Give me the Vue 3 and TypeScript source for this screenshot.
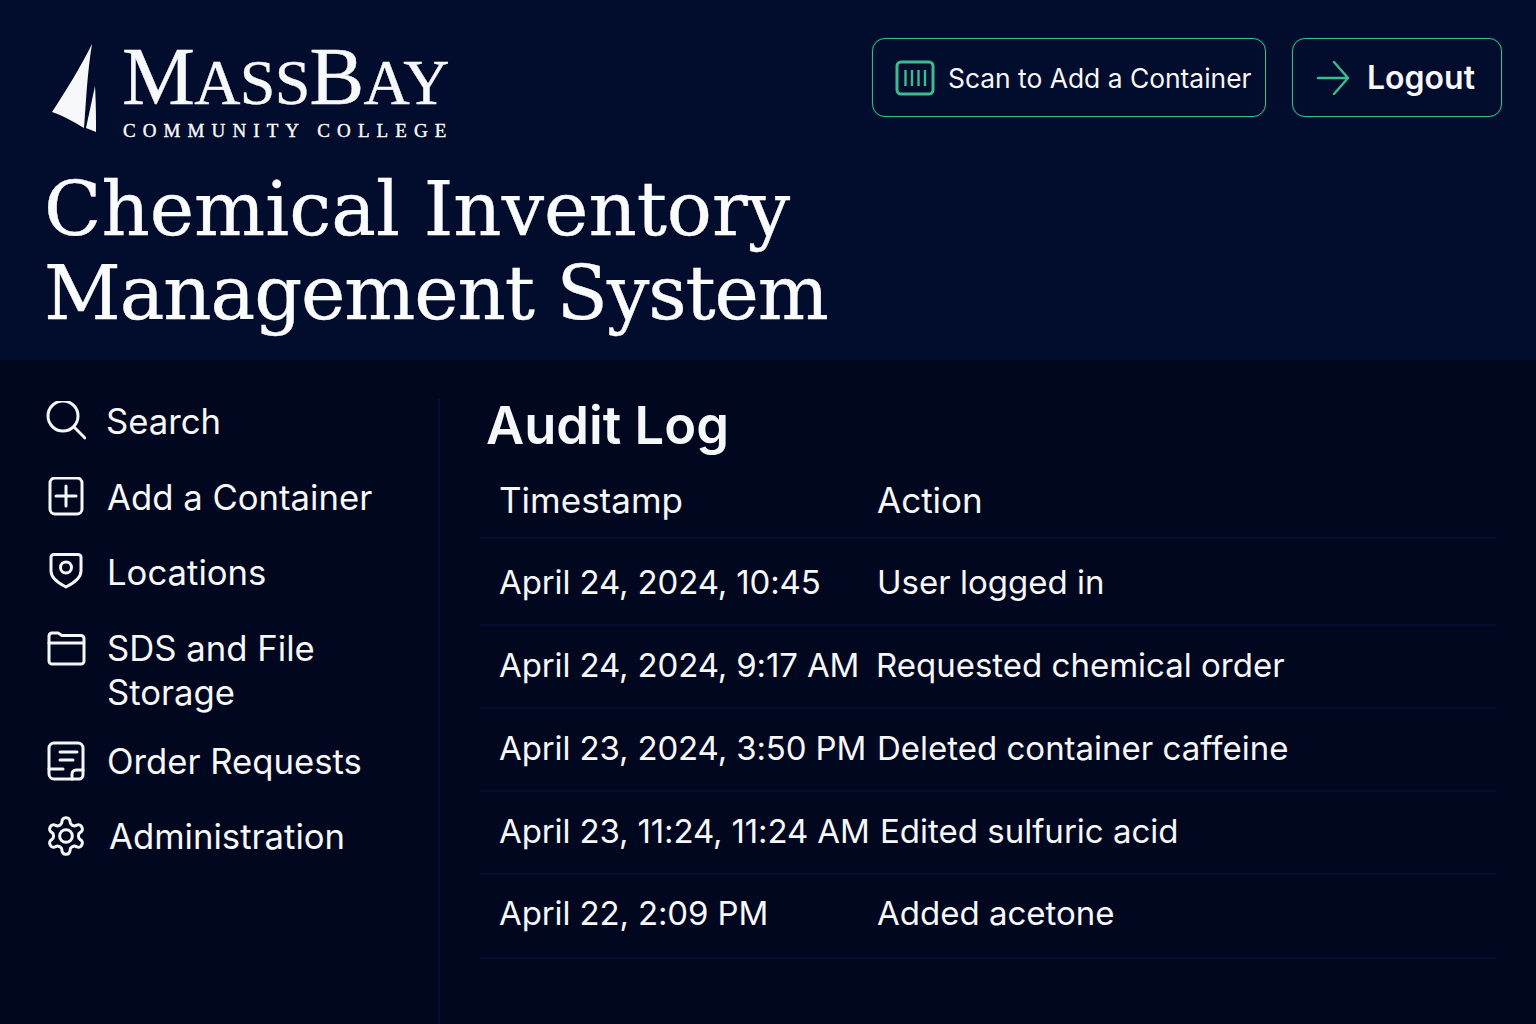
<template>
  <div class="page">
    <header class="top">
      <div class="top-row">
        <div class="logo">
          <svg class="sail" width="50" height="92" viewBox="0 0 50 92" aria-hidden="true">
            <path d="M43 0 C38 30 37 60 35 84 C24 77 12 71 3 68 C17 47 32 22 43 0 Z" fill="#f7f8fa" />
            <path d="M46 42 C47 60 47 75 47 88 L37 84 C40 70 43 56 46 42 Z" fill="#f7f8fa" />
          </svg>
          <div class="wordmark">
            <div class="brand"><span class="cap">M</span>ASS<span class="cap">B</span>AY</div>
            <div class="sub">COMMUNITY COLLEGE</div>
          </div>
        </div>
        <div class="actions">
          <button class="btn scan">
            <svg width="40" height="36" viewBox="0 0 40 36" fill="none" stroke="#3dbb90" aria-hidden="true">
              <rect x="2" y="2" width="36" height="32" rx="4" stroke-width="3" />
              <path d="M10.5 10v16M17 10v16M23.5 10v16M30 10v16" stroke-width="2.4" />
            </svg>
            Scan to Add a Container
          </button>
          <button class="btn logout">
            <svg width="34" height="34" viewBox="0 0 34 34" fill="none" stroke="#3dbb90" stroke-width="2.4" stroke-linecap="round" stroke-linejoin="round" aria-hidden="true">
              <path d="M2 17h30M18 1l14 16-14 16" />
            </svg>
            Logout
          </button>
        </div>
      </div>
      <h1 class="title">
        <span class="line-one">Chemical Inventory</span>
        <span class="line-two">Management System</span>
      </h1>
    </header>

    <div class="body">
      <nav class="side">
        <a v-for="item in navItems" :key="item.label" class="nav-item" :class="item.cls">
          <svg
            class="nav-icon"
            width="40"
            height="40"
            :viewBox="item.box"
            fill="none"
            stroke="#f4f6f8"
            :stroke-width="item.weight"
            stroke-linecap="round"
            stroke-linejoin="round"
            aria-hidden="true"
          >
            <path v-for="(d, i) in item.paths" :key="i" :d="d" />
          </svg>
          <span>{{ item.label }}</span>
        </a>
      </nav>

      <main class="content">
        <h2>Audit Log</h2>
        <div class="log-row log-head">
          <span>Timestamp</span>
          <span>Action</span>
        </div>
        <div v-for="row in rows" :key="row.time" class="log-row">
          <span class="time">{{ row.time }}</span>
          <span :class="row.cls">{{ row.action }}</span>
        </div>
      </main>
    </div>
  </div>
</template>

<script setup lang="ts">
const navItems = [
  {
    label: "Search",
    cls: "tight",
    box: "0 0 40 40",
    weight: 3,
    paths: ["M17 0a15 15 0 1 0 0 30a15 15 0 1 0 0-30Z", "M28 26l11 11"],
  },
  {
    label: "Add a Container",
    cls: "",
    box: "0 0 40 40",
    weight: 3,
    paths: ["M9 1h22a5 5 0 0 1 5 5v26a5 5 0 0 1-5 5H9a5 5 0 0 1-5-5V6a5 5 0 0 1 5-5Z", "M20 9v20M10 19h20"],
  },
  {
    label: "Locations",
    cls: "",
    box: "0 0 40 40",
    weight: 3,
    paths: [
      "M8 2.500c8 0 16 0 24 0c1.500 0 3 1 3 2.500v14c0 7-7 12-15 16c-8-4-15-9-15-16V5c0-1.500 1.500-2.500 3-2.500Z",
      "M20 10a5.500 5.500 0 1 0 0 11a5.500 5.500 0 1 0 0-11Z",
    ],
  },
  {
    label: "SDS and File Storage",
    cls: "multi",
    box: "0 0 40 40",
    weight: 3,
    paths: ["M3 10a3 3 0 0 1 3-3h6l4 2.500h19a3 3 0 0 1 3 3V35a3 3 0 0 1-3 3H6a3 3 0 0 1-3-3Z", "M3 17h34"],
  },
  {
    label: "Order Requests",
    cls: "",
    box: "0 0 40 40",
    weight: 3,
    paths: [
      "M8 2h24a5 5 0 0 1 5 5v27a4 4 0 0 1-4 4H8a5 5 0 0 1-5-5V7a5 5 0 0 1 5-5Z",
      "M14 11h17M14 19h13M3 28h14M26 38v-5a4 4 0 0 1 4-4h7",
    ],
  },
  {
    label: "Administration",
    cls: "wide",
    box: "1 1 22 22",
    weight: 1.65,
    paths: [
      "M12.220 2h-.44a2 2 0 0 0-2 2v.18a2 2 0 0 1-1 1.730l-.43.25a2 2 0 0 1-2 0l-.15-.08a2 2 0 0 0-2.730.73l-.22.38a2 2 0 0 0 .73 2.730l.15.1a2 2 0 0 1 1 1.720v.51a2 2 0 0 1-1 1.740l-.15.09a2 2 0 0 0-.73 2.730l.22.38a2 2 0 0 0 2.730.73l.15-.08a2 2 0 0 1 2 0l.43.25a2 2 0 0 1 1 1.730V20a2 2 0 0 0 2 2h.44a2 2 0 0 0 2-2v-.18a2 2 0 0 1 1-1.730l.43-.25a2 2 0 0 1 2 0l.15.08a2 2 0 0 0 2.730-.73l.22-.39a2 2 0 0 0-.73-2.730l-.15-.08a2 2 0 0 1-1-1.740v-.5a2 2 0 0 1 1-1.740l.15-.09a2 2 0 0 0 .73-2.730l-.22-.38a2 2 0 0 0-2.730-.73l-.15.08a2 2 0 0 1-2 0l-.43-.25a2 2 0 0 1-1-1.730V4a2 2 0 0 0-2-2z",
      "M12 8.500a3.500 3.500 0 1 0 0 7a3.500 3.500 0 1 0 0-7Z",
    ],
  },
];

const rows = [
  { time: "April 24, 2024, 10:45", action: "User logged in", cls: "" },
  { time: "April 24, 2024, 9:17 AM", action: "Requested chemical order", cls: "back" },
  { time: "April 23, 2024, 3:50 PM", action: "Deleted container caffeine", cls: "" },
  { time: "April 23, 11:24, 11:24 AM", action: "Edited sulfuric acid", cls: "shift" },
  { time: "April 22, 2:09 PM", action: "Added acetone", cls: "" },
];
</script>

<style scoped>
.page {
  width: 1536px;
  height: 1024px;
  overflow: hidden;
  background: #01071f;
  color: #f6f7f9;
  font-family: Inter, "Noto Sans", sans-serif;
}

.top {
  height: 360px;
  box-sizing: border-box;
  padding: 38px 34px 0 46px;
  background: #020c2c;
}

.top-row {
  display: flex;
  justify-content: space-between;
  height: 102px;
}

.logo {
  display: flex;
  gap: 24px;
  margin-left: 3px;
}

.sail {
  margin-top: 6px;
}

.wordmark {
  padding-top: 2px;
  font-family: "Liberation Serif", serif;
  color: #f7f8fa;
  -webkit-text-stroke: 0.4px #f7f8fa;
}

.brand {
  font-size: 64px;
  line-height: 74px;
  letter-spacing: -0.7px;
  margin-left: -1px;
  white-space: nowrap;
}

.cap {
  font-size: 82px;
}

.sub {
  font-size: 19px;
  line-height: 22px;
  letter-spacing: 7.1px;
  white-space: nowrap;
}

.actions {
  display: flex;
  gap: 26px;
  align-items: flex-start;
}

.btn {
  display: flex;
  align-items: center;
  height: 79px;
  box-sizing: border-box;
  border: 1px solid #33c088;
  border-radius: 13px;
  box-shadow: 0 0 1px #2bb57d;
  background: transparent;
  color: #f6f7f9;
  font-family: inherit;
}

.scan {
  width: 394px;
  gap: 13px;
  padding: 1px 0 0 22px;
  font-size: 26.4px;
}

.logout {
  width: 210px;
  gap: 17px;
  padding-left: 23px;
  font-size: 32px;
  font-weight: 600;
}

.title {
  margin: 27px 0 0 -2px;
  font-family: "DejaVu Serif", serif;
  font-size: 75px;
  font-weight: 400;
  line-height: 84px;
  color: #fafbfc;
  white-space: nowrap;
  -webkit-text-stroke: 0.4px #fafbfc;
}

.line-one,
.line-two {
  display: block;
}

.line-one {
  letter-spacing: 0;
}

.line-two {
  letter-spacing: -1.1px;
}

.body {
  display: flex;
  height: 664px;
}

.side {
  width: 440px;
  flex: none;
  box-sizing: border-box;
  margin-top: 39px;
  padding: 0 40px 0 46px;
  border-right: 2px solid #05112f;
  display: flex;
  flex-direction: column;
  gap: 31.7px;
  font-size: 34.7px;
  line-height: 44px;
}

.nav-item {
  display: flex;
  gap: 21px;
  align-items: center;
}

.nav-item.tight {
  gap: 20px;
}

.nav-item.multi {
  align-items: flex-start;
  margin-bottom: -7px;
}

.nav-item.wide {
  gap: 23px;
}

.nav-icon {
  flex: none;
}

.content {
  flex: 1;
  padding: 35px 40px 0 40px;
}

h2 {
  margin: 0;
  padding-left: 6px;
  font-size: 52.500px;
  font-weight: 600;
  line-height: 60px;
}

.log-row {
  display: grid;
  grid-template-columns: 378px 1fr;
  align-items: center;
  height: 83px;
  padding: 0 0 4px 19px;
  border-bottom: 2px solid #040f30;
  box-sizing: border-box;
  font-size: 33px;
  white-space: nowrap;
}

.time {
  letter-spacing: -0.13px;
}

.log-head {
  height: 84px;
  padding: 8px 0 0 19px;
  font-size: 35px;
}

.log-row:nth-child(3) {
  height: 87px;
  padding-bottom: 0;
}

.log-row:last-child {
  height: 84px;
  padding-bottom: 6px;
}

.shift {
  margin-left: 3px;
}

.back {
  margin-left: -1px;
}
</style>

<style>
html,
body {
  background: #01071f;
}
</style>
